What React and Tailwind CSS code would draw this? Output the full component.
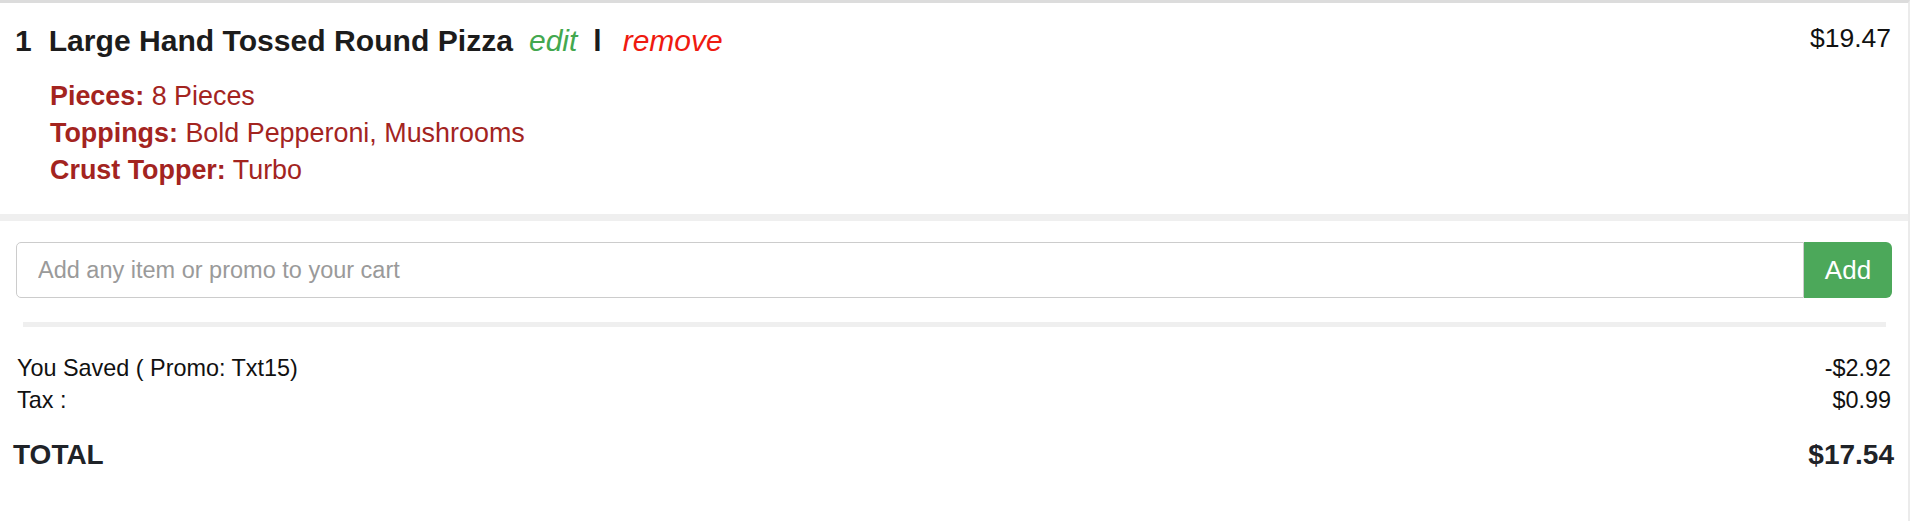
import { useState } from 'react'

const details = [
  { label: 'Pieces:', value: '8 Pieces' },
  { label: 'Toppings:', value: 'Bold Pepperoni, Mushrooms' },
  { label: 'Crust Topper:', value: 'Turbo' },
]

export default function App() {
  const [promo, setPromo] = useState('')

  return (
    <div className="min-h-screen bg-white font-['Liberation_Sans',Arial,Helvetica,sans-serif]">
      <div className="w-[1910px] h-[521px] border-t-[3px] border-t-[#dcdcdc] border-r-2 border-r-[#ebebeb]">
        {/* cart item */}
        <div className="flex items-start justify-between pt-[20px] pb-[25.5px] pl-[15px] pr-[17px] border-b-[7px] border-b-[#efefef]">
          <div>
            <div className="flex items-baseline text-[30px] leading-[36px] text-[#1c1c1c]">
              <span className="font-bold mr-[17px]">1</span>
              <span className="font-bold text-[30.1px]">Large Hand Tossed Round Pizza</span>
              <a href="#" className="ml-[16px] italic text-[#43a84f]">edit</a>
              <span className="ml-[16px] font-bold">l</span>
              <a href="#" className="ml-[21px] italic text-[#ef1a10]">remove</a>
            </div>
            <div className="mt-[18.5px] pl-[35px] text-[26.9px] leading-[37px] text-[#a3241f]">
              {details.map((d) => (
                <div key={d.label}>
                  <span className="font-bold">{d.label}</span> {d.value}
                </div>
              ))}
            </div>
          </div>
          <div className="text-[26.5px] leading-[30px] text-[#111]">$19.47</div>
        </div>

        {/* promo input */}
        <div className="flex pt-[21px] pb-[24px] px-[16px]">
          <input
            type="text"
            value={promo}
            onChange={(e) => setPromo(e.target.value)}
            placeholder="Add any item or promo to your cart"
            className="flex-1 h-[56px] pl-[21px] border border-[#cccccc] rounded-l-[5px] text-[23.5px] text-[#333] placeholder:text-[#9a9a9a] outline-none"
          />
          <button className="w-[88px] h-[56px] bg-[#4ca85a] text-white text-[26px] rounded-r-[6px]">
            Add
          </button>
        </div>

        <div className="ml-[23px] mr-[22px] h-[5px] bg-[#efefef]" />

        {/* totals */}
        <div className="pt-[24.5px] pl-[13px] pr-[14px]">
          <div className="pl-[4px] pr-[3px] text-[23.4px] leading-[32.5px] text-[#111]">
            <div className="flex justify-between">
              <span>You Saved ( Promo: Txt15)</span>
              <span>-$2.92</span>
            </div>
            <div className="flex justify-between">
              <span>Tax :</span>
              <span>$0.99</span>
            </div>
          </div>
          <div className="mt-[20px] flex justify-between text-[28px] leading-[36px] font-bold text-[#1f2328]">
            <span>TOTAL</span>
            <span>$17.54</span>
          </div>
        </div>
      </div>
    </div>
  )
}
